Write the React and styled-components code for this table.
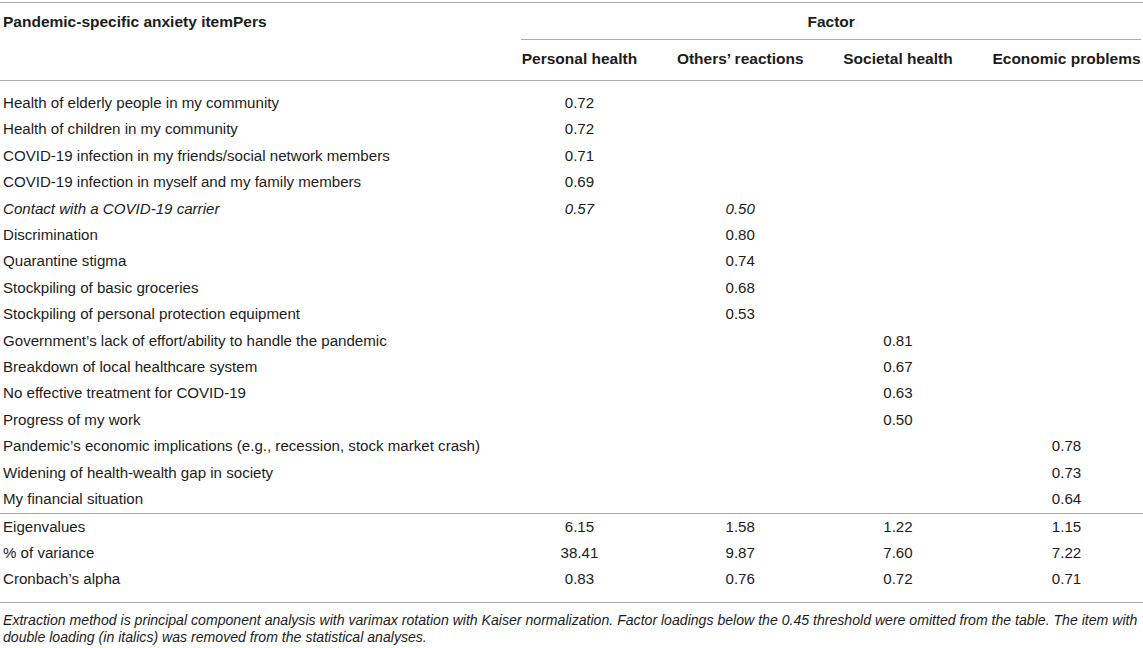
import React from 'react';
import styled, { createGlobalStyle } from "styled-components";

const GlobalStyle = createGlobalStyle`
body{
    margin:0;
    background:#ffffff;
    font-family:"Liberation Sans", Arial, Helvetica, sans-serif;
    color:#1c1c1c;
}
`;

const Page = styled.div`
padding-top:2px;
width:1143px;
`;

const Table = styled.table`
width:100%;
border-collapse:separate;
border-spacing:0;
border-top:1px solid #a9a9a9;
font-size:15.1px;
`;

const HeadCell = styled.th`
font-weight:bold;
font-size:15.5px;
line-height:16px;
white-space:nowrap;
vertical-align:top;
text-align:${p => (p.$left ? "left" : "center")};
padding:${p => p.$pad || "11px 19.5px 13px"};
border-bottom:${p => (p.$ruled ? "1px solid #a9a9a9" : "none")};
&:last-child{
    padding-right:${p => (p.$left ? "19.5px" : "2px")};
}
`;

const FactorLabel = styled.div`
margin-left:19.5px;
padding-bottom:9px;
border-bottom:1px solid #a9a9a9;
text-align:center;
font-weight:bold;
`;

const Cell = styled.td`
line-height:26.4px;
padding:${p => (p.$first ? "9px" : "0")} 19.5px ${p => (p.$last ? "9px" : "0")};
text-align:center;
white-space:nowrap;
font-style:${p => (p.$italic ? "italic" : "normal")};
border-bottom:${p => (p.$ruled ? "1px solid #a9a9a9" : "none")};
&:first-child{
    text-align:left;
    padding-left:3px;
}
&:last-child{
    padding-right:2px;
}
`;

const Footnote = styled.p`
margin:0;
padding:9px 0 0 3px;
font-size:14.1px;
line-height:17px;
font-style:italic;
white-space:nowrap;
color:#1c1c1c;
`;

const items = [
    ["Health of elderly people in my community", "0.72", "", "", ""],
    ["Health of children in my community", "0.72", "", "", ""],
    ["COVID-19 infection in my friends/social network members", "0.71", "", "", ""],
    ["COVID-19 infection in myself and my family members", "0.69", "", "", ""],
    ["Contact with a COVID-19 carrier", "0.57", "0.50", "", "", true],
    ["Discrimination", "", "0.80", "", ""],
    ["Quarantine stigma", "", "0.74", "", ""],
    ["Stockpiling of basic groceries", "", "0.68", "", ""],
    ["Stockpiling of personal protection equipment", "", "0.53", "", ""],
    ["Government\u2019s lack of effort/ability to handle the pandemic", "", "", "0.81", ""],
    ["Breakdown of local healthcare system", "", "", "0.67", ""],
    ["No effective treatment for COVID-19", "", "", "0.63", ""],
    ["Progress of my work", "", "", "0.50", ""],
    ["Pandemic\u2019s economic implications (e.g., recession, stock market crash)", "", "", "", "0.78"],
    ["Widening of health-wealth gap in society", "", "", "", "0.73"],
    ["My financial situation", "", "", "", "0.64"],
];

const summary = [
    ["Eigenvalues", "6.15", "1.58", "1.22", "1.15"],
    ["% of variance", "38.41", "9.87", "7.60", "7.22"],
    ["Cronbach\u2019s alpha", "0.83", "0.76", "0.72", "0.71"],
];

const factors = ["Personal health", "Others\u2019 reactions", "Societal health", "Economic problems"];

function App() {
    return (
        <Page>
            <GlobalStyle />
            <Table>
                <thead>
                    <tr>
                        <HeadCell $left rowSpan={2} $ruled $pad="11px 19.5px 13px 3px">Pandemic-specific anxiety itemPers</HeadCell>
                        <HeadCell colSpan={4} $pad="11px 0 0 0">
                            <FactorLabel>Factor</FactorLabel>
                        </HeadCell>
                    </tr>
                    <tr>
                        {factors.map(f => (
                            <HeadCell key={f} $ruled>{f}</HeadCell>
                        ))}
                    </tr>
                </thead>
                <tbody>
                    {items.map((row, i) => (
                        <tr key={row[0]}>
                            {row.slice(0, 5).map((v, j) => (
                                <Cell
                                    key={j}
                                    $first={i === 0}
                                    $ruled={i === items.length - 1}
                                    $italic={row[5]}
                                >
                                    {v}
                                </Cell>
                            ))}
                        </tr>
                    ))}
                    {summary.map((row, i) => (
                        <tr key={row[0]}>
                            {row.map((v, j) => (
                                <Cell
                                    key={j}
                                    $last={i === summary.length - 1}
                                    $ruled={i === summary.length - 1}
                                >
                                    {v}
                                </Cell>
                            ))}
                        </tr>
                    ))}
                </tbody>
            </Table>
            <Footnote>
                Extraction method is principal component analysis with varimax rotation with Kaiser normalization. Factor loadings below the 0.45 threshold were omitted from the table. The item with
                <br />
                double loading (in italics) was removed from the statistical analyses.
            </Footnote>
        </Page>
    )
}

export default App
